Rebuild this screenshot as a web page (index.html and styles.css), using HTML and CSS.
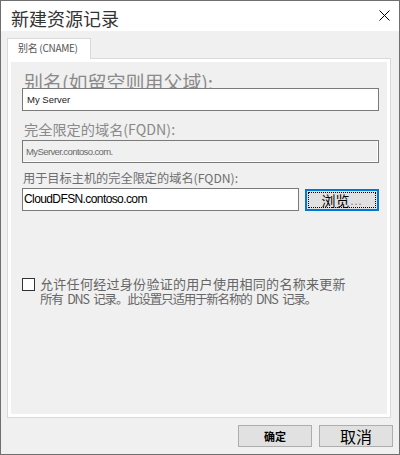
FILE: index.html
```html
<!DOCTYPE html>
<html lang="zh-CN">
<head>
<meta charset="utf-8">
<title>新建资源记录</title>
<link rel="stylesheet" href="styles.css">
</head>
<body>
<div class="window">
  <div class="titlebar">
    <div class="title">新建资源记录</div>
    <svg class="close" width="11" height="11" viewBox="0 0 11 11"><path d="M0.5 0.5 L10.5 10.5 M10.5 0.5 L0.5 10.5" stroke="#000" stroke-width="1" fill="none"/></svg>
  </div>
  <div class="main">
    <div class="tab">别名 (CNAME)</div>
    <div class="panel">
      <div class="label big">别名(如留空则用父域):</div>
      <div class="input">My Server</div>
      <div class="label mid">完全限定的域名(FQDN):</div>
      <div class="input disabled">MyServer.contoso.com.</div>
      <div class="label small">用于目标主机的完全限定的域名(FQDN):</div>
      <div class="row">
        <div class="input target">CloudDFSN.contoso.com</div>
        <div class="browse"><span class="focus">浏览<span class="dots">...</span></span></div>
      </div>
      <div class="check">
        <span class="box"></span>
        <span class="checktext"><span class="line1">允许任何经过身份验证的用户使用相同的名称来更新</span><span class="line2">所有 DNS 记录。此设置只适用于新名称的 DNS 记录。</span></span>
      </div>
    </div>
    <div class="buttons">
      <div class="btn ok">确定</div>
      <div class="btn cancel">取消</div>
    </div>
  </div>
</div>
</body>
</html>
```
FILE: styles.css
```css
html, body {
  margin: 0;
  padding: 0;
  background: #ffffff;
}
body {
  font-family: "Liberation Sans", "Noto Sans CJK SC", sans-serif;
}
.window {
  width: 400px;
  height: 455px;
  box-sizing: border-box;
  border: 1px solid #6f6f6f;
  display: flex;
  flex-direction: column;
  background: #f0f0f0;
}
.titlebar {
  height: 30px;
  background: #ffffff;
  display: flex;
  justify-content: space-between;
  align-items: flex-start;
}
.title {
  font-family: "Noto Sans CJK SC", sans-serif;
  font-size: 18px;
  line-height: 20px;
  color: #333333;
  padding: 7px 0 0 10px;
}
.close {
  margin: 9px 9px 0 0;
}
.main {
  flex: 1;
  padding: 7px 6px 0 6px;
  display: flex;
  flex-direction: column;
}
.tab {
  position: relative;
  width: 84px;
  height: 21px;
  box-sizing: border-box;
  margin-bottom: -1px;
  background: #ffffff;
  border: 1px solid #d9d9d9;
  border-bottom: none;
  font-family: "Noto Sans CJK SC", sans-serif;
  font-size: 10px;
  letter-spacing: -0.3px;
  line-height: 18px;
  color: #555555;
  padding-left: 10px;
}
.panel {
  width: 384px;
  height: 360px;
  box-sizing: border-box;
  border: 1px solid #d9d9d9;
  box-shadow: inset 0 0 0 3px #ffffff;
  padding: 13px 11px 0 14px;
  display: flex;
  flex-direction: column;
}
.label {
  font-family: "Noto Sans CJK SC", sans-serif;
  white-space: nowrap;
}
.label.big {
  font-size: 19px;
  line-height: 19px;
  height: 19px;
  color: #8a8a8a;
  margin-bottom: -3px;
  padding-left: 2px;
}
.label.mid {
  font-size: 14.2px;
  line-height: 15px;
  color: #8a8a8a;
  margin: 11px 0 3px 2px;
}
.label.small {
  font-size: 12.2px;
  line-height: 14px;
  color: #6e6e6e;
  margin: 8px 0 3px 1px;
}
.input {
  position: relative;
  height: 23px;
  box-sizing: border-box;
  border: 1px solid #7a7a7a;
  background: #ffffff;
  font-size: 9.5px;
  line-height: 21px;
  color: #222222;
  padding-left: 4px;
}
.input.disabled {
  background: #f0f0f0;
  box-shadow: inset -1px -1px 0 #ffffff;
  color: #6a6a6a;
  font-size: 9.5px;
  letter-spacing: -0.6px;
  padding-left: 3px;
}
.row {
  display: flex;
  align-items: flex-start;
  gap: 6px;
}
.input.target {
  width: 277px;
  font-size: 12px;
  letter-spacing: -0.6px;
  color: #000000;
  padding-left: 1px;
}
.browse {
  width: 74px;
  height: 22px;
  margin-top: 1px;
  box-sizing: border-box;
  border: 2px solid #0078d7;
  background: #e1e1e1;
  padding: 1px;
  display: flex;
}
.focus {
  flex: 1;
  border: 1px dotted #000000;
  display: flex;
  align-items: center;
  justify-content: center;
  font-family: "Noto Sans CJK SC", sans-serif;
  font-size: 14px;
  line-height: 14px;
  color: #000000;
}
.dots {
  color: #a07080;
  font-size: 11px;
  letter-spacing: 1px;
  margin-left: 1px;
}
.check {
  margin-top: 66px;
  display: flex;
  align-items: flex-start;
  gap: 5px;
}
.box {
  width: 13px;
  height: 13px;
  box-sizing: border-box;
  border: 1px solid #333333;
  background: #ffffff;
  flex: none;
  margin-top: 1px;
}
.checktext {
  display: flex;
  flex-direction: column;
  font-family: "Noto Sans CJK SC", sans-serif;
  color: #666666;
  white-space: nowrap;
}
.line1 {
  font-size: 13px;
  line-height: 14px;
  height: 14px;
  letter-spacing: 0.3px;
}
.line2 {
  font-size: 12.5px;
  line-height: 13px;
  height: 13px;
  margin-top: 1px;
  letter-spacing: -1.2px;
  word-spacing: 3px;
}
.buttons {
  display: flex;
  justify-content: flex-end;
  gap: 7px;
  margin-top: 7px;
}
.btn {
  width: 74px;
  height: 22px;
  box-sizing: border-box;
  border: 1px solid #adadad;
  background: #e1e1e1;
  display: flex;
  align-items: center;
  justify-content: center;
  font-family: "Noto Sans CJK SC", sans-serif;
  color: #000000;
}
.btn.ok {
  font-size: 11px;
  font-weight: bold;
}
.btn.cancel {
  font-size: 16px;
}
```
